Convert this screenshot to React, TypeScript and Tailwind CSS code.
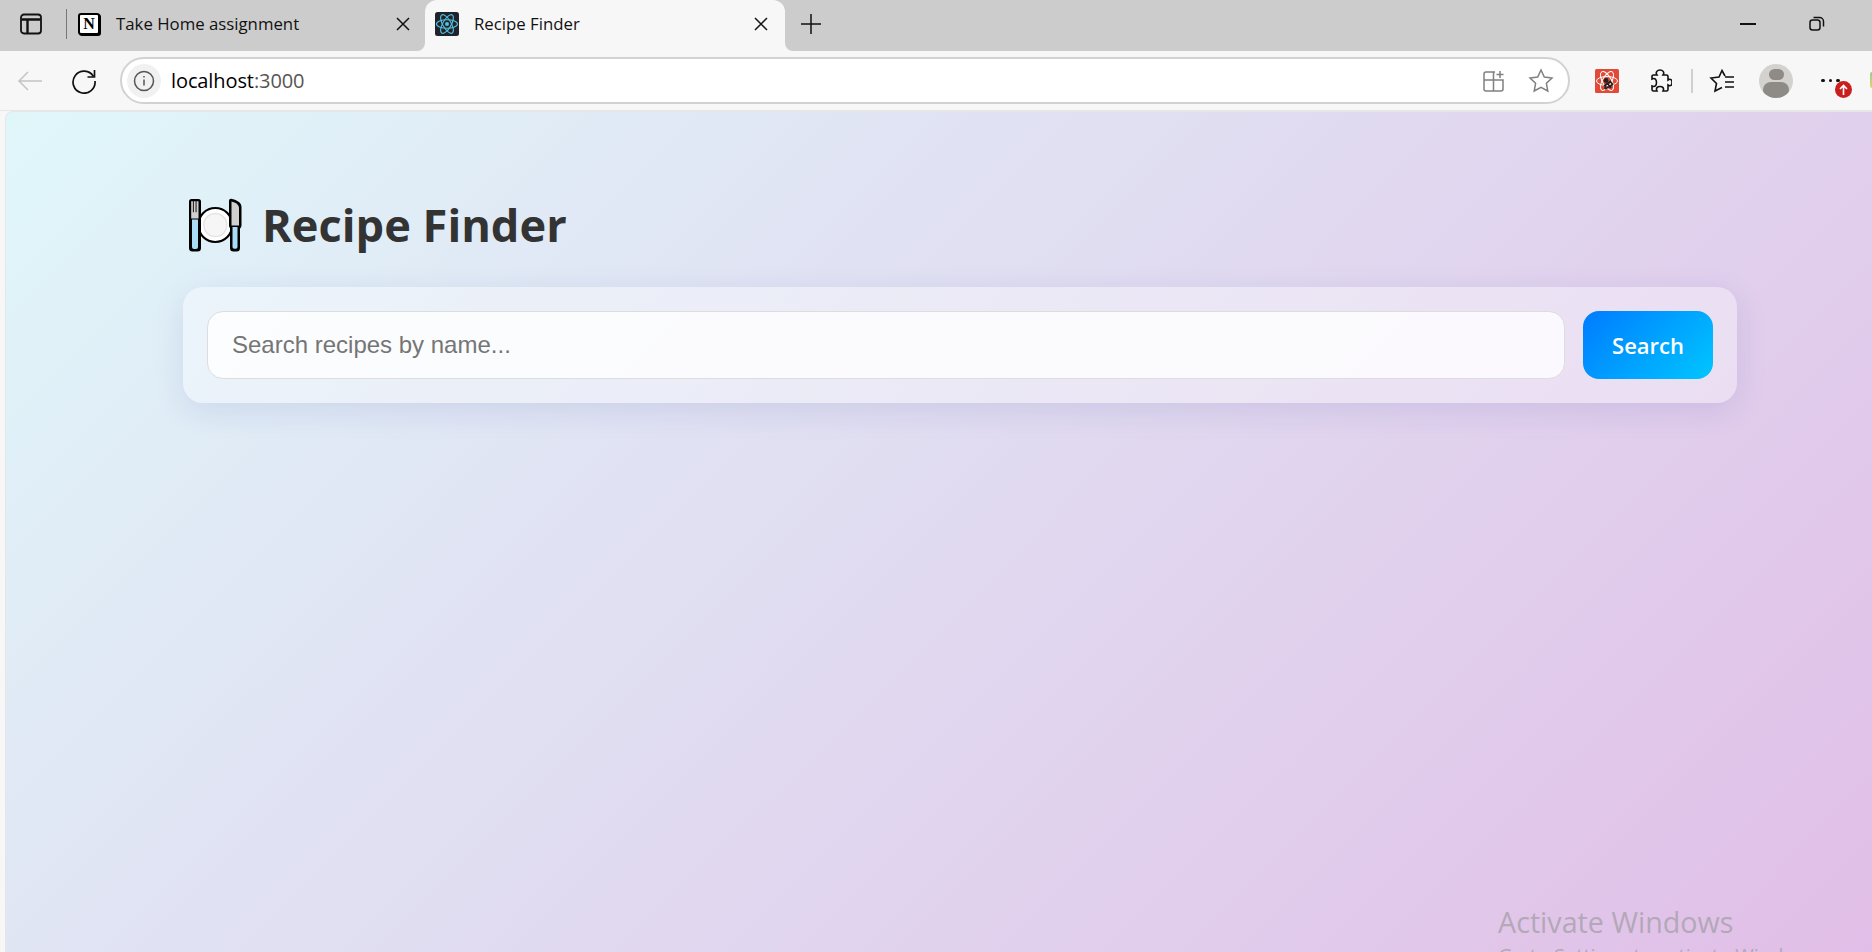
const segoe = "font-['Open_Sans','Noto_Sans',sans-serif]"

function SidebarIcon() {
  return (
    <svg width="22" height="22" viewBox="0 0 22 22" fill="none" stroke="#111" strokeWidth="1.8">
      <rect x="1" y="1.5" width="20" height="19" rx="3" />
      <path d="M1.5 6.500h19M7.500 7v13" strokeWidth="2.400" />
    </svg>
  )
}

function NotionLogo() {
  return (
    <div className="w-[22px] h-[22px] bg-white border-2 border-black rounded-[3px] flex items-center justify-center shadow-[1px_1px_0_#000]">
      <span className="font-['Liberation_Serif',serif] font-bold text-[16px] leading-none text-black">N</span>
    </div>
  )
}

function ReactLogo() {
  return (
    <svg width="24" height="24" viewBox="0 0 24 24" fill="none" stroke="#53c1de" strokeWidth="1.1">
      <rect width="24" height="24" rx="2.5" fill="#20232a" stroke="none" />
      <ellipse cx="12" cy="12" rx="10.5" ry="4.2" />
      <ellipse cx="12" cy="12" rx="10.5" ry="4.2" transform="rotate(60 12 12)" />
      <ellipse cx="12" cy="12" rx="10.5" ry="4.2" transform="rotate(120 12 12)" />
      <circle cx="12" cy="12" r="2" fill="#53c1de" stroke="none" />
    </svg>
  )
}

function CloseIcon() {
  return (
    <svg width="14" height="14" viewBox="0 0 14 14" stroke="#111" strokeWidth="1.5">
      <path d="M1 1l12 12M13 1L1 13" />
    </svg>
  )
}

function BugExtension() {
  return (
    <svg width="24" height="24" viewBox="0 0 24 24" fill="none" stroke="#fff" strokeWidth="1">
      <rect width="24" height="24" rx="1.5" fill="#e04a36" stroke="none" />
      <ellipse cx="12" cy="12" rx="10.5" ry="4.5" />
      <ellipse cx="12" cy="12" rx="10.5" ry="4.5" transform="rotate(60 12 12)" />
      <ellipse cx="12" cy="12" rx="10.5" ry="4.5" transform="rotate(120 12 12)" />
      <circle cx="11" cy="11.5" r="2.4" fill="#222" stroke="none" />
      <path d="M12 14l4 5M11 15l-1 5M15 12l3 4M9 17l7-5M10 20l7-4" stroke="#222" strokeWidth="1.6" />
    </svg>
  )
}

function PlateIcon() {
  return (
    <svg width="54" height="54" viewBox="0 0 54 54" className="shrink-0">
      {/* plate */}
      <circle cx="27.300" cy="27" r="17" fill="#fff" stroke="#000" strokeWidth="2.2" />
      <circle cx="27.300" cy="27" r="11.500" fill="#f6f6f6" stroke="#e4e4e4" strokeWidth="1.400" />
      {/* fork */}
      <path d="M1 3.500A2.500 2.500 0 0 1 3.500 1h7A2.500 2.500 0 0 1 13 3.500V50a3.500 3.500 0 0 1-3.500 3.500h-5A3.500 3.500 0 0 1 1 50z" fill="#000" />
      <path d="M3.200 3.200h1.700v11h.9v-11h1.800v11h.9v-11h2v17.300H3.200z" fill="#cfcfcf" />
      <path d="M4 21.500h6V49a2 2 0 0 1-2 2H6a2 2 0 0 1-2-2z" fill="#a9dcf5" />
      {/* knife */}
      <path d="M41 3c0-1.500 1.300-2.500 3-2 6 1.500 9.500 4 9.500 8v18c0 2-.8 3-1.500 3.500V50a3.500 3.500 0 0 1-3.500 3.500h-3A3.500 3.500 0 0 1 42 50V30c-.7-.6-1-1.500-1-2.500z" fill="#000" />
      <path d="M43.500 3.500c4 1 7.500 3 7.500 6.500v17.500H43.500z" fill="#cfcfcf" />
      <path d="M44.500 29h5v20a1.800 1.800 0 0 1-1.800 1.800h-1.400a1.800 1.800 0 0 1-1.800-1.800z" fill="#a9dcf5" />
    </svg>
  )
}

function TitleBar() {
  return (
    <div className="h-[51px] flex shrink-0 bg-[linear-gradient(#cccccc_50%,#f7f7f7_50%)] text-[#111]">
      <div className="w-[425px] pb-[4px] flex items-center bg-[#cccccc] rounded-br-[8px]">
        <div className="ml-[20px]"><SidebarIcon /></div>
        <div className="ml-[24px] w-px h-[30px] bg-[#777]" />
        <div className="ml-[11px]"><NotionLogo /></div>
        <span className={`ml-[16px] text-[16.800px] ${segoe}`}>Take Home assignment</span>
        <div className="ml-auto mr-[15px]"><CloseIcon /></div>
      </div>
      <div className="w-[360px] pb-[4px] flex items-center bg-[#f7f7f7] rounded-t-[12px]">
        <div className="ml-[10px]"><ReactLogo /></div>
        <span className={`ml-[15px] text-[16.800px] ${segoe}`}>Recipe Finder</span>
        <div className="ml-auto mr-[17px]"><CloseIcon /></div>
      </div>
      <div className="flex-1 pb-[4px] flex items-center bg-[#cccccc] rounded-bl-[8px]">
        <svg width="22" height="22" viewBox="0 0 22 22" stroke="#111" strokeWidth="1.5" className="ml-[15px]">
          <path d="M11 1v20M1 11h20" />
        </svg>
        <svg width="16" height="2" viewBox="0 0 16 2" className="ml-auto mr-[53px]">
          <rect width="16" height="2" fill="#111" />
        </svg>
        <svg width="16" height="16" viewBox="0 0 16 16" fill="none" stroke="#111" strokeWidth="1.5" className="mr-[47px]">
          <rect x="1" y="4" width="10" height="10" rx="2.500" />
          <path d="M4.500 1.500h6a4 4 0 0 1 4 4v5" />
        </svg>
      </div>
    </div>
  )
}

function Toolbar() {
  return (
    <div className="relative h-[60px] shrink-0 bg-[#f7f7f7] border-b border-[#e6e6e6] flex items-center">
      <svg width="26" height="22" viewBox="0 0 26 22" fill="none" stroke="#c4c4c4" strokeWidth="1.500" className="ml-[17px]">
        <path d="M25 11H2M11 2l-9 9 9 9" />
      </svg>
      <svg width="26" height="26" viewBox="0 0 26 26" fill="none" stroke="#111" strokeWidth="1.700" className="ml-[28px]">
        <path d="M22.500 8.500A11 11 0 1 0 24 13" />
        <path d="M23.500 2v7h-7" />
      </svg>
      {/* address bar */}
      <div className="ml-[23px] w-[1450px] h-[47px] bg-white rounded-full border-2 border-[#d2d2d2] flex items-center">
        <div className="ml-[5px] w-[34px] h-[34px] rounded-full bg-[#f1f1f1] flex items-center justify-center">
          <svg width="22" height="22" viewBox="0 0 22 22" fill="none" stroke="#555" strokeWidth="1.500">
            <circle cx="11" cy="11" r="9.500" />
            <path d="M11 9.500v6M11 6v1.600" />
          </svg>
        </div>
        <span className={`ml-[10px] text-[20px] tracking-[-0.1px] text-black ${segoe}`}>
          localhost<span className="text-[#555]">:3000</span>
        </span>
        <svg width="22" height="22" viewBox="0 0 22 22" fill="none" stroke="#808080" strokeWidth="1.500" className="ml-auto">
          <path d="M12 2H3a2 2 0 0 0-2 2v15a2 2 0 0 0 2 2h15a2 2 0 0 0 2-2v-9H1M10.500 2v19M17 1v7M13.500 4.500h7" />
        </svg>
        <svg width="26" height="25" viewBox="0 0 26 25" fill="none" stroke="#808080" strokeWidth="1.500" className="ml-[23px] mr-[14px]">
          <path d="M13 2l3.300 7 7.700 1-5.600 5.300 1.400 7.700L13 19.300 6.200 23l1.400-7.700L2 10l7.700-1z" />
        </svg>
      </div>
      <div className="ml-[25px]"><BugExtension /></div>
      <svg width="24" height="24" viewBox="0 0 24 24" fill="none" stroke="#111" strokeWidth="1.600" className="ml-[29px]">
        <path d="M9 6c-2-3 .5-5 3-5s5 2 3 5h3.500a1.500 1.500 0 0 1 1.500 1.500V11c3-2 4 .5 4 2.500s-1 4.500-4 2.500v4.500a1.500 1.500 0 0 1-1.500 1.500H15c1.500-3-.5-4.500-3-4.500S7.500 19 9 22H5.500A1.500 1.500 0 0 1 4 20.500V17c3 1.500 4.500-.5 4.500-3.500S7 8.500 4 10V7.500A1.500 1.500 0 0 1 5.500 6z" />
      </svg>
      <div className="ml-[19px] w-[2px] h-[24px] bg-[#cfcfcf]" />
      <svg width="26" height="24" viewBox="0 0 26 24" fill="none" stroke="#111" strokeWidth="1.600" className="ml-[16px]">
        <path d="M16 7l-3-5.500L10 8l-8 1 5.500 5.500L6 22l7-3.500" />
        <path d="M16 8h9M16 13h9M16 18h9" />
      </svg>
      <div className="ml-[24px] w-[34px] h-[34px] rounded-full bg-[#d3d2ce] overflow-hidden flex flex-col items-center">
        <div className="mt-[5px] w-[15px] h-[15px] rounded-full bg-[#8e8a86]" />
        <div className="mt-[2px] w-[26px] h-[20px] rounded-full bg-[#8e8a86]" />
      </div>
      <div className="relative ml-[28px] flex gap-[4px]">
        <div className="w-[3.500px] h-[3.500px] rounded-full bg-[#111]" />
        <div className="w-[3.500px] h-[3.500px] rounded-full bg-[#111]" />
        <div className="w-[3.500px] h-[3.500px] rounded-full bg-[#111]" />
        <div className="absolute left-[14px] top-[2px] w-[17px] h-[17px] rounded-full bg-[#c81e1e] flex items-center justify-center">
          <svg width="9" height="11" viewBox="0 0 9 11" fill="none" stroke="#fff" strokeWidth="1.600">
            <path d="M4.500 11V1.500M1 5l3.500-3.500L8 5" />
          </svg>
        </div>
      </div>
      {/* sliver of the next toolbar icon, cut by the window edge */}
      <div className="absolute right-0 top-[21px] w-[2px] h-[16px] rounded-l-full bg-[linear-gradient(#8fd18f,#e8d070)]" />
    </div>
  )
}

export default function App() {
  return (
    <div className="relative w-screen h-screen overflow-hidden bg-[#f7f7f7] flex flex-col">
      <TitleBar />
      <Toolbar />
      <main className="flex-1 ml-[5px] rounded-tl-[8px] border-l border-t border-[#e6e6e6] bg-[linear-gradient(135deg,#e0f7fa,#e1bee7)] pt-[85px] pl-[177px]">
        <div className="flex items-center gap-[20px] ml-[5px] h-[56px]">
          <PlateIcon />
          <h1 className={`text-[45.200px] leading-none font-bold text-[#333333] ${segoe}`}>Recipe Finder</h1>
        </div>
        <div className="mt-[34px] w-[1554px] h-[116px] rounded-[20px] bg-white/35 shadow-[0_8px_32px_rgba(31,38,135,0.1)] p-[24px] flex items-center gap-[18px]">
          <input
            readOnly
            placeholder="Search recipes by name..."
            className="flex-1 h-[68px] rounded-[16px] border border-[#dddddd] bg-white/80 px-[24px] text-[24px] font-['Liberation_Sans',Arial,sans-serif] placeholder:text-[#757575] outline-none"
          />
          <button className={`w-[130px] h-[68px] rounded-[16px] bg-[linear-gradient(135deg,#007bff,#00c6ff)] text-white text-[22px] font-semibold ${segoe}`}>
            Search
          </button>
        </div>
      </main>
      <div className={`absolute left-[1498px] top-[902px] text-[#b3a8b8] text-[28.700px] leading-[40px] whitespace-nowrap ${segoe}`}>
        <div>Activate Windows</div>
        <div className="text-[20px] leading-[24px] mt-[2px]">Go to Settings to activate Windows.</div>
      </div>
    </div>
  )
}
